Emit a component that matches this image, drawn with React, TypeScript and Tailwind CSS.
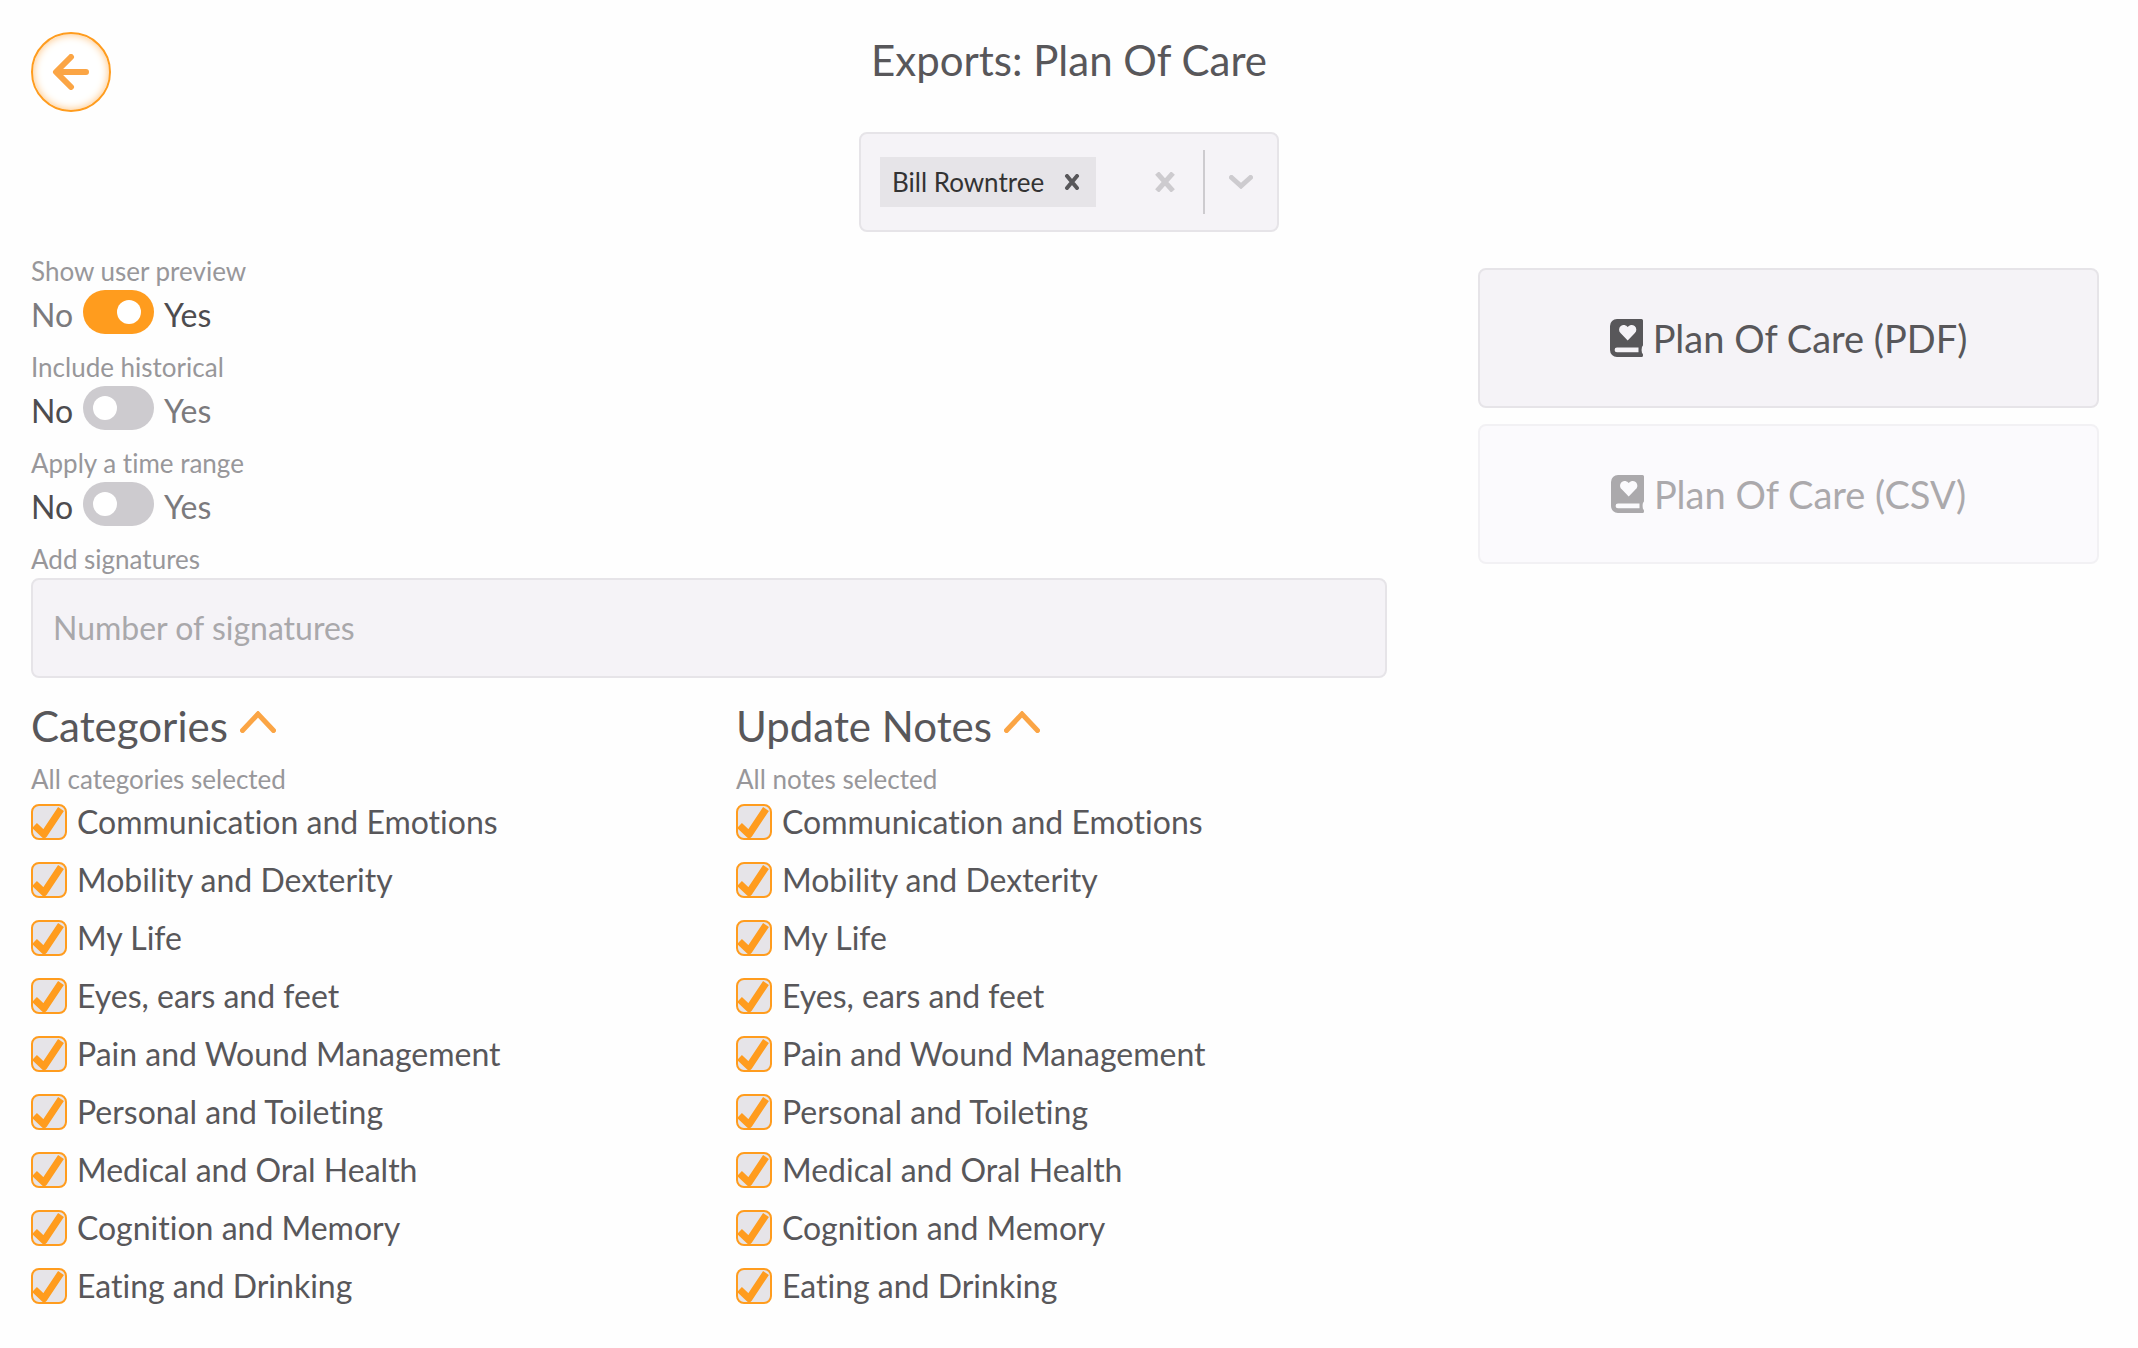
import { useState } from "react";

const topics = [
  "Communication and Emotions",
  "Mobility and Dexterity",
  "My Life",
  "Eyes, ears and feet",
  "Pain and Wound Management",
  "Personal and Toileting",
  "Medical and Oral Health",
  "Cognition and Memory",
  "Eating and Drinking",
];

function BookIcon() {
  return (
    <svg viewBox="0 0 33 38" className="h-[38px] w-[33px]" aria-hidden="true">
      <path
        fill="currentColor"
        fillRule="evenodd"
        d="M7 0H31.500a1.500 1.500 0 0 1 1.500 1.500V26a2 2 0 0 1-1 1.700q-.8 3 0 6.300a2 2 0 0 1 1 1.700V36.500a1.500 1.500 0 0 1-1.500 1.500H7a7 7 0 0 1-7-7V7a7 7 0 0 1 7-7ZM7 28.500a2.400 2.400 0 0 0 0 4.800H28.500V28.500ZM17.700 21.500l7.200-7.400c2-2 1.900-5.300-.3-7.100-2-1.600-4.700-1.200-6.300.5l-.6.600-.6-.6c-1.600-1.700-4.300-2.100-6.300-.5-2.200 1.800-2.300 5.100-.3 7.100Z"
      />
    </svg>
  );
}

function Toggle({ label, initial = false }: { label: string; initial?: boolean }) {
  const [on, setOn] = useState(initial);
  return (
    <div className="h-24">
      <p className="h-[38px] text-[26px] leading-[38px] text-[#98979a]">{label}</p>
      <label className="flex h-11 items-center gap-[10px] text-[32px]">
        <span className={on ? "pt-[6px] text-[#7b7a7d]" : "pt-[6px] text-[#4d4c4f]"}>No</span>
        <input
          type="checkbox"
          role="switch"
          aria-label={label}
          checked={on}
          onChange={() => setOn(!on)}
          className="h-11 w-[71px] appearance-none rounded-full bg-[#cdcbcf] p-[10px] before:block before:size-6 before:rounded-full before:bg-white checked:bg-[#ff9c1e] checked:before:ml-6"
        />
        <span className={on ? "pt-[6px] text-[#4d4c4f]" : "pt-[6px] text-[#7b7a7d]"}>Yes</span>
      </label>
    </div>
  );
}

function CheckList({ title, note }: { title: string; note: string }) {
  const [open, setOpen] = useState(true);
  return (
    <section className="flex-1">
      <h2>
        <button onClick={() => setOpen(!open)} className="flex h-16 items-center gap-3 text-[42px]">
          {title}
          <svg viewBox="0 0 36 22" className="mb-2 h-[22px] w-9" fill="none" aria-hidden="true">
            <path d="M2.500 19.500 18 3 33.500 19.500" stroke="#fba545" strokeWidth="5" strokeLinecap="round" />
          </svg>
        </button>
      </h2>
      <p className="h-11 text-[26px] leading-[42px] text-[#98979a]">{note}</p>
      {open && (
        <ul>
          {topics.map((topic) => (
            <li key={topic} className="h-[58px]">
              <label className="flex items-center gap-[10px] text-[32px] leading-[40px]">
                <span className="grid">
                  <input
                    type="checkbox"
                    defaultChecked
                    className="peer col-start-1 row-start-1 size-9 appearance-none rounded-lg border-2 border-[#ff9c1e] bg-[#e6e4e8]"
                  />
                  <svg
                    viewBox="0 0 36 36"
                    className="pointer-events-none invisible col-start-1 row-start-1 size-9 peer-checked:visible"
                    fill="none"
                    aria-hidden="true"
                  >
                    <path
                      d="M3.500 21.500 13 30.500 30 5"
                      stroke="#ff9c1e"
                      strokeWidth="7"
                      strokeLinejoin="round"
                    />
                  </svg>
                </span>
                {topic}
              </label>
            </li>
          ))}
        </ul>
      )}
    </section>
  );
}

export default function App() {
  return (
    <div className="min-h-screen bg-[#fefefe] px-[31px] pt-8 pb-10 font-[Lato,'Open_Sans',sans-serif] text-[#58575a] [font-variant-ligatures:none]">
      <header className="grid grid-cols-[80px_1fr_80px] items-start">
        <button
          aria-label="Back"
          className="flex size-20 items-center justify-center rounded-full border-2 border-[#ff9c1e] bg-white shadow-[inset_0_0_8px_#ffc078]"
        >
          <svg viewBox="0 0 38 36" className="h-9 w-[38px]" fill="none" aria-hidden="true">
            <path d="M34 18H5M19 3 4 18 19 33" stroke="#fba545" strokeWidth="6" strokeLinecap="round" strokeLinejoin="round" />
          </svg>
        </button>
        <h1 className="text-center text-[42px] leading-[56px]">Exports: Plan Of Care</h1>
      </header>

      {/* Selected residents */}
      <div className="mx-auto mt-5 flex h-[100px] w-[420px] items-center rounded-lg border-2 border-[#e6e4e8] bg-[#f5f3f7] pl-[19px]">
        <div className="flex h-[50px] items-center bg-[#e6e4e8] pl-3 text-[26px] text-[#333]">
          Bill Rowntree
          <button aria-label="Remove Bill Rowntree" className="ml-5 pr-4">
            <svg viewBox="0 0 16 16" className="size-4" aria-hidden="true">
              <path d="M3 2 13 14M13 2 3 14" stroke="#58575a" strokeWidth="4" strokeLinecap="round" />
            </svg>
          </button>
        </div>
        <button aria-label="Clear all" className="mr-7 ml-auto">
          <svg viewBox="0 0 20 20" className="size-5" aria-hidden="true">
            <path d="M2 1 18 19M18 1 2 19" stroke="#cdcbcf" strokeWidth="5" />
          </svg>
        </button>
        <span className="h-16 w-[2px] bg-[#cdcbcf]" />
        <button aria-label="Open list" className="mr-6 ml-6">
          <svg viewBox="0 0 24 14" className="h-[14px] w-6" fill="none" aria-hidden="true">
            <path d="M2.500 2.500 12 11 21.500 2.500" stroke="#cdcbcf" strokeWidth="5" strokeLinecap="round" />
          </svg>
        </button>
      </div>

      <main className="mt-5 flex items-start gap-[91px] pr-2">
        <div className="flex-[1356]">
          <Toggle label="Show user preview" initial />
          <Toggle label="Include historical" />
          <Toggle label="Apply a time range" />
          <label htmlFor="signatures" className="block h-[38px] text-[26px] leading-[38px] text-[#98979a]">
            Add signatures
          </label>
          <input
            id="signatures"
            placeholder="Number of signatures"
            className="block h-[100px] w-full rounded-lg border-2 border-[#e6e4e8] bg-[#f5f3f7] px-5 pb-[2px] text-[32px] placeholder:text-[#a9a8ab]"
          />
          <div className="mt-4 flex gap-[54px]">
            <CheckList title="Categories" note="All categories selected" />
            <CheckList title="Update Notes" note="All notes selected" />
          </div>
        </div>

        <div className="mt-4 flex flex-[621] flex-col gap-4">
          <button className="flex h-[140px] items-center justify-center gap-[10px] rounded-lg border-2 border-[#e6e4e8] bg-[#f5f3f7] text-[38px]">
            <BookIcon />
            Plan Of Care (PDF)
          </button>
          <button
            disabled
            className="flex h-[140px] items-center justify-center gap-[10px] rounded-lg border-2 border-[#f2f1f4] bg-[#fbfafd] text-[38px] text-[#aba9ac]"
          >
            <BookIcon />
            Plan Of Care (CSV)
          </button>
        </div>
      </main>
    </div>
  );
}
